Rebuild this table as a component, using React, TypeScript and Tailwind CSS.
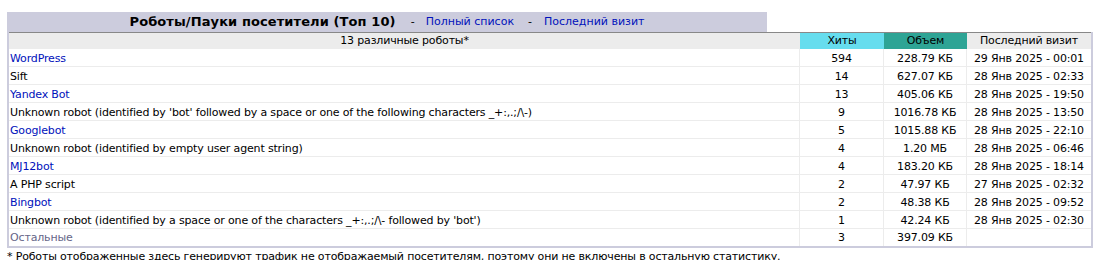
const robots = [
  { name: "WordPress", link: true, hits: "594", size: "228.79 КБ", last: "29 Янв 2025 - 00:01" },
  { name: "Sift", link: false, hits: "14", size: "627.07 КБ", last: "28 Янв 2025 - 02:33" },
  { name: "Yandex Bot", link: true, hits: "13", size: "405.06 КБ", last: "28 Янв 2025 - 19:50" },
  {
    name: "Unknown robot (identified by 'bot' followed by a space or one of the following characters _+:,.;/\\-)",
    link: false,
    hits: "9",
    size: "1016.78 КБ",
    last: "28 Янв 2025 - 13:50",
  },
  { name: "Googlebot", link: true, hits: "5", size: "1015.88 КБ", last: "28 Янв 2025 - 22:10" },
  {
    name: "Unknown robot (identified by empty user agent string)",
    link: false,
    hits: "4",
    size: "1.20 МБ",
    last: "28 Янв 2025 - 06:46",
  },
  { name: "MJ12bot", link: true, hits: "4", size: "183.20 КБ", last: "28 Янв 2025 - 18:14" },
  { name: "A PHP script", link: false, hits: "2", size: "47.97 КБ", last: "27 Янв 2025 - 02:32" },
  { name: "Bingbot", link: true, hits: "2", size: "48.38 КБ", last: "28 Янв 2025 - 09:52" },
  {
    name: "Unknown robot (identified by a space or one of the characters _+:,.;/\\- followed by 'bot')",
    link: false,
    hits: "1",
    size: "42.24 КБ",
    last: "28 Янв 2025 - 02:30",
  },
];

const cell = "h-[18px] pt-[1px] border-r border-b border-[#ececec] leading-[17px] whitespace-nowrap overflow-hidden";

export default function App() {
  return (
    <div className="bg-white pt-[12px] px-[7px] text-[11px] tracking-[-0.16px] text-black font-['DejaVu_Sans',Verdana,sans-serif]">
      {/* Title */}
      <div className="w-[1086px] flex">
        <div className="w-[760px] h-[20px] bg-[#ccccdd] flex items-center justify-center tracking-normal">
          <span className="text-[13px] font-bold tracking-[0.1px]">Роботы/Пауки посетители (Топ 10)</span>
          <span className="ml-[15px] mr-[11px]">-</span>
          <a href="#" className="text-[#0011bb]">Полный список</a>
          <span className="ml-[14px] mr-[12px]">-</span>
          <a href="#" className="text-[#0011bb]">Последний визит</a>
        </div>
      </div>

      {/* Table */}
      <div className="w-[1086px] bg-[#ccccdd] px-[2px] pb-[2px]">
        <div className="bg-white border-t border-[#888888]">
          <div className="grid grid-cols-[791px_84px_83px_124px] h-[16px] leading-[16px] text-center">
            <div className="bg-[#ececec]">13 различные роботы*</div>
            <div className="bg-[#66ddee]">Хиты</div>
            <div className="bg-[#2ea495]">Объем</div>
            <div className="bg-[#ececec]">Последний визит</div>
          </div>
          {robots.map((r) => (
            <div key={r.name} className="grid grid-cols-[791px_84px_83px_124px]">
              <div className={`${cell} pl-[1px] text-left`}>
                {r.link ? (
                  <a href="#" className="text-[#0011bb]">{r.name}</a>
                ) : (
                  r.name
                )}
              </div>
              <div className={`${cell} text-center`}>{r.hits}</div>
              <div className={`${cell} text-center`}>{r.size}</div>
              <div className={`${cell} text-center border-r-0`}>{r.last}</div>
            </div>
          ))}
          <div className="grid grid-cols-[791px_84px_83px_124px]">
            <div className="h-[17px] pt-[1px] leading-[16px] border-r border-[#ececec] pl-[1px] text-[#666688]">Остальные</div>
            <div className="h-[17px] pt-[1px] leading-[16px] border-r border-[#ececec] text-center">3</div>
            <div className="h-[17px] pt-[1px] leading-[16px] border-r border-[#ececec] text-center">397.09 КБ</div>
            <div className="h-[17px]"></div>
          </div>
        </div>
      </div>

      {/* Footnote */}
      <div className="pt-[2px] leading-[13px] whitespace-nowrap">
        * Роботы отображенные здесь генерируют трафик не отображаемый посетителям, поэтому они не включены в остальную статистику.
      </div>
    </div>
  );
}
